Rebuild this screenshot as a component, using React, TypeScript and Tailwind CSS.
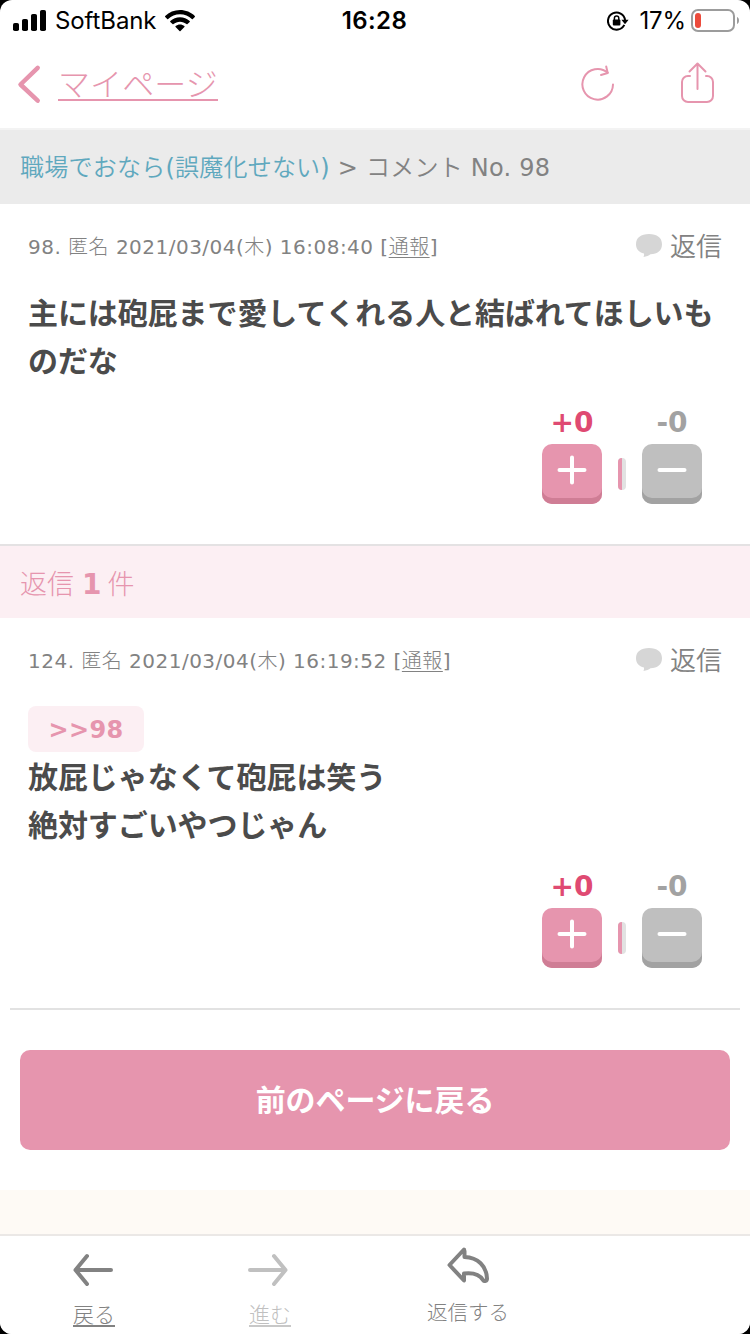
import type { ReactNode } from 'react'

type Comment = {
  no: number
  date: string
  replyTo?: number
  lines: string[]
  plus: number
  minus: number
}

const TARGET: Comment = {
  no: 98,
  date: '2021/03/04(木) 16:08:40',
  lines: ['主には砲屁まで愛してくれる人と結ばれてほしいも', 'のだな'],
  plus: 0,
  minus: 0,
}

const REPLIES: Comment[] = [
  {
    no: 124,
    date: '2021/03/04(木) 16:19:52',
    replyTo: 98,
    lines: ['放屁じゃなくて砲屁は笑う', '絶対すごいやつじゃん'],
    plus: 0,
    minus: 0,
  },
]

function StatusBar() {
  return (
    <div className="grid h-10 grid-cols-3 items-center pl-[13px] pr-[11px] pt-px font-['Inter','Liberation_Sans',sans-serif] text-2xl leading-10 text-black">
      <div className="flex items-center">
        <svg width="33" height="22" viewBox="0 0 33 22" className="mr-[9px]">
          <rect x="0" y="13" width="6" height="8" rx="1.8" />
          <rect x="9" y="9" width="6" height="12" rx="1.8" />
          <rect x="18" y="4" width="6" height="17" rx="1.8" />
          <rect x="27" y="0" width="6" height="21" rx="1.8" />
        </svg>
        <span className="tracking-[-0.1px]">SoftBank</span>
        <svg width="30" height="22" viewBox="0 0 30 22" className="ml-[9px]">
          <path d="M15 0C9.300 0 4 2.200 .2 5.900c-.3.300-.3.700 0 1l2 2c.3.300.7.300 1 0C6.300 5.900 10.400 4.200 15 4.200s8.700 1.700 11.800 4.700c.3.300.7.300 1 0l2-2c.3-.3.300-.7 0-1C26 2.200 20.700 0 15 0z" />
          <path d="M15 7.200c-3.700 0-7.100 1.400-9.700 3.700-.3.300-.3.700 0 1l2.200 2.200c.3.300.7.300 1 0 1.700-1.500 4-2.400 6.500-2.400s4.800.9 6.500 2.400c.3.300.7.300 1 0l2.200-2.200c.3-.3.300-.7 0-1C22.100 8.600 18.700 7.200 15 7.200z" />
          <path d="M15 14.500c-1.700 0-3.200.6-4.400 1.600-.3.300-.3.700 0 1l3.900 3.900c.3.300.7.300 1 0l3.900-3.900c.3-.3.300-.7 0-1-1.200-1-2.700-1.600-4.400-1.600z" />
        </svg>
      </div>
      <span className="pr-[3px] text-center font-semibold tracking-[0.4px]">16:28</span>
      <div className="flex items-center justify-end">
        <svg width="22" height="20" viewBox="0 0 22 20" className="mr-[10px]">
          <path d="M17.300 13.900A8.600 8.600 0 1 1 18.100 9" fill="none" stroke="#000" strokeWidth="2" />
          <path d="M14.400 8.800h7.200L18 13.200z" />
          <rect x="5.800" y="8.600" width="7.600" height="6" rx="1" />
          <path d="M7.400 9V7.300a2.200 2.200 0 0 1 4.400 0V9" fill="none" stroke="#000" strokeWidth="1.500" />
        </svg>
        <span className="tracking-[-0.1px]">17%</span>
        <svg width="48" height="24" viewBox="0 0 48 24" className="-mt-px ml-[5px]">
          <rect x="1" y="1" width="42" height="21" rx="6" fill="none" stroke="#9c9c9c" strokeWidth="2" />
          <rect x="4" y="4" width="6" height="15" rx="3" fill="#ec4b3c" />
          <path d="M46 8c1.300.5 2 1.800 2 3.500S47.300 14.500 46 15z" fill="#9c9c9c" />
        </svg>
      </div>
    </div>
  )
}

function NavBar() {
  return (
    <header className="flex h-[90px] items-center border-b-2 border-[#f3f3f3] pl-[17px] pr-[34px] text-[#e695ae]">
      <a className="flex items-center">
        <svg width="24" height="40" viewBox="0 0 24 40" fill="none" stroke="currentColor" strokeWidth="4.500" strokeLinecap="round" strokeLinejoin="round">
          <path d="M20.700 3.800 3.500 20.500l17.200 16.200" />
        </svg>
        <span className="ml-[17px] h-[34px] border-b-2 border-[#e695ae] text-[32px] font-light leading-[36px] tracking-[0.1px]">マイページ</span>
      </a>
      <svg width="36" height="40" viewBox="0 0 36 40" fill="none" stroke="currentColor" strokeWidth="2" strokeLinecap="round" strokeLinejoin="round" className="ml-auto">
        <path d="M33 20.500A15.300 15.300 0 1 1 27.700 8.700" />
        <path d="M26.200 2.500l1.500 6.500-6.700 2" />
      </svg>
      <svg width="36" height="44" viewBox="0 0 36 44" fill="none" stroke="currentColor" strokeWidth="2" strokeLinecap="round" strokeLinejoin="round" className="-mt-[2px] ml-[64px]">
        <path d="M10 15H8a6 6 0 0 0-6 6v14a6 6 0 0 0 6 6h19a6 6 0 0 0 6-6V21a6 6 0 0 0-6-6h-1" />
        <path d="M17.500 28V3M9.500 10.500l8-8 8 8" />
      </svg>
    </header>
  )
}

function VoteButton({ label, labelClass, buttonClass, children }: {
  label: string
  labelClass: string
  buttonClass: string
  children: ReactNode
}) {
  return (
    <div className="w-[60px]">
      <p className={`-mb-[2px] text-center text-[28px] font-bold leading-[46px] ${labelClass}`}>{label}</p>
      <button className={`flex h-[60px] w-[60px] justify-center rounded-[10px] pt-[11px] ${buttonClass}`}>
        <svg width="30" height="30" viewBox="0 0 30 30" fill="none" stroke="#fff" strokeWidth="4" strokeLinecap="round">
          {children}
        </svg>
      </button>
    </div>
  )
}

function CommentItem({ comment }: { comment: Comment }) {
  return (
    <article className="px-7 pb-10">
      <div className="flex h-[86px] items-center justify-between text-[#828282]">
        <p className="font-['DejaVu_Sans','Noto_Sans_CJK_JP_Light','Noto_Sans_CJK_JP',sans-serif] text-xl tracking-[0.48px]">
          {comment.no}. 匿名 {comment.date} [<a className="underline decoration-1 underline-offset-[3px]">通報</a>]
        </p>
        <a className="flex items-center text-[26px] font-[350]">
          <svg width="26" height="24" viewBox="0 0 26 24" fill="#d6d6d6" className="-mt-[3px] mr-2">
            <path d="M13 0C5 0 0 3.700 0 10.200c0 4.700 2.800 7.900 8 9.300.2 1.300 0 2.300-.5 3.500 3-.6 5.200-1.500 7-2.800C21.500 20 26 16.500 26 10.200 26 3.700 21 0 13 0z" />
          </svg>
          返信
        </a>
      </div>
      {comment.replyTo && (
        <a className="mb-[2px] mt-[2px] flex h-[46px] w-[116px] items-center justify-center rounded-lg bg-[#fceff3] pt-px text-2xl font-bold tracking-[0.3px] text-[#e695ae]">
          &gt;&gt;{comment.replyTo}
        </a>
      )}
      <div className="whitespace-nowrap text-[30px] font-bold leading-[48px] tracking-[-0.08px] text-[#4b4b4b]">
        {comment.lines.map(line => <p key={line}>{line}</p>)}
      </div>
      <div className="mt-3 flex items-end justify-end gap-4 pr-5 pt-0.5 -mb-0">
        <VoteButton label={`+${comment.plus}`} labelClass="text-[#df4a72]" buttonClass="bg-[#e695ae] shadow-[inset_0_-6px_0_#cf7d95]">
          <path d="M2.500 15h25M15 2.500v25" />
        </VoteButton>
        <div className="mb-[14px] flex h-8 w-2 overflow-hidden rounded bg-[#e2e2e2]">
          <div className="w-1 bg-[#e695ae]" />
        </div>
        <VoteButton label={`-${comment.minus}`} labelClass="text-[#a2a2a2]" buttonClass="bg-[#bfbfbf] shadow-[inset_0_-6px_0_#a2a2a2]">
          <path d="M2.500 15h25" />
        </VoteButton>
      </div>
    </article>
  )
}

function ToolBar() {
  return (
    <footer className="flex h-[100px] items-start whitespace-nowrap border-t-2 border-[#ebe8e6] bg-white text-[21px] font-light text-[#828282]">
      <a className="ml-[73px] mt-4 flex w-[42px] flex-col items-center">
        <svg width="42" height="36" viewBox="0 0 42 36" fill="none" stroke="currentColor" strokeWidth="4" strokeLinecap="round" strokeLinejoin="round">
          <path d="M14 4 2.500 18 14 32M2.500 18H38" />
        </svg>
        <span className="mt-[12px] h-[27px] border-b-2 border-[#828282] text-[21px] leading-[31px]">戻る</span>
      </a>
      <a className="ml-[133px] mt-4 flex w-[44px] flex-col items-start text-[#c0c0c0]">
        <svg width="42" height="36" viewBox="0 0 42 36" fill="none" stroke="currentColor" strokeWidth="4" strokeLinecap="round" strokeLinejoin="round">
          <path d="M26 4l11.500 14L26 32M37.500 18H2" />
        </svg>
        <span className="ml-px mt-[12px] h-[27px] border-b-2 border-[#c8c8c8] leading-[31px]">進む</span>
      </a>
      <a className="ml-[135px] mt-[10px] flex w-[82px] flex-col items-center">
        <svg width="44" height="38" viewBox="0 0 44 38" fill="none" stroke="currentColor" strokeWidth="4" strokeLinecap="round" strokeLinejoin="round">
          <path d="M18 3.500 3.500 19 18 34.500V27.500c8-1 15 0 19 6.500 1.500 2 4 1 4-1.500C40.500 20 32 11.500 18.500 11V5" />
        </svg>
        <span className="mt-[14px] text-[20.500px] leading-[30px]">返信する</span>
      </a>
    </footer>
  )
}

export default function App() {
  return (
    <div className="h-[1334px] w-[750px] overflow-hidden bg-black">
      <div className="flex h-full flex-col overflow-hidden rounded-[12px] bg-white font-['DejaVu_Sans','Noto_Sans_CJK_JP',sans-serif]">
        <StatusBar />
        <NavBar />
        <nav className="flex h-[74px] items-center whitespace-pre bg-[#ebebeb] px-5 pt-[2px] font-['DejaVu_Sans','Noto_Sans_CJK_JP_DemiLight','Noto_Sans_CJK_JP',sans-serif] text-2xl tracking-[0.23px] text-[#828282]">
          <a className="text-[#5fa8be]">職場でおなら(誤魔化せない)</a>
          <span> &gt; コメント No. 98</span>
        </nav>
        <CommentItem comment={TARGET} />
        <h2 className="flex h-[74px] items-center whitespace-pre border-t-2 border-[#e4e2e3] bg-[#fceff3] px-5 pt-[6px] text-[27px] font-light text-[#e695ae]">
          <span>返信</span>
          <b className="ml-[8px] mr-[6px] text-[28px] font-bold">{REPLIES.length}</b>
          <span>件</span>
        </h2>
        {REPLIES.map(reply => <CommentItem key={reply.no} comment={reply} />)}
        <div className="mx-[10px] border-t-2 border-[#e2e2e2] px-[10px] py-10">
          <button className="h-[100px] w-full rounded-[10px] bg-[#e695ae] text-[30px] font-bold tracking-[-0.1px] text-white">
            前のページに戻る
          </button>
        </div>
        <div className="h-11 bg-[#fefaf5]" />
        <ToolBar />
      </div>
    </div>
  )
}
